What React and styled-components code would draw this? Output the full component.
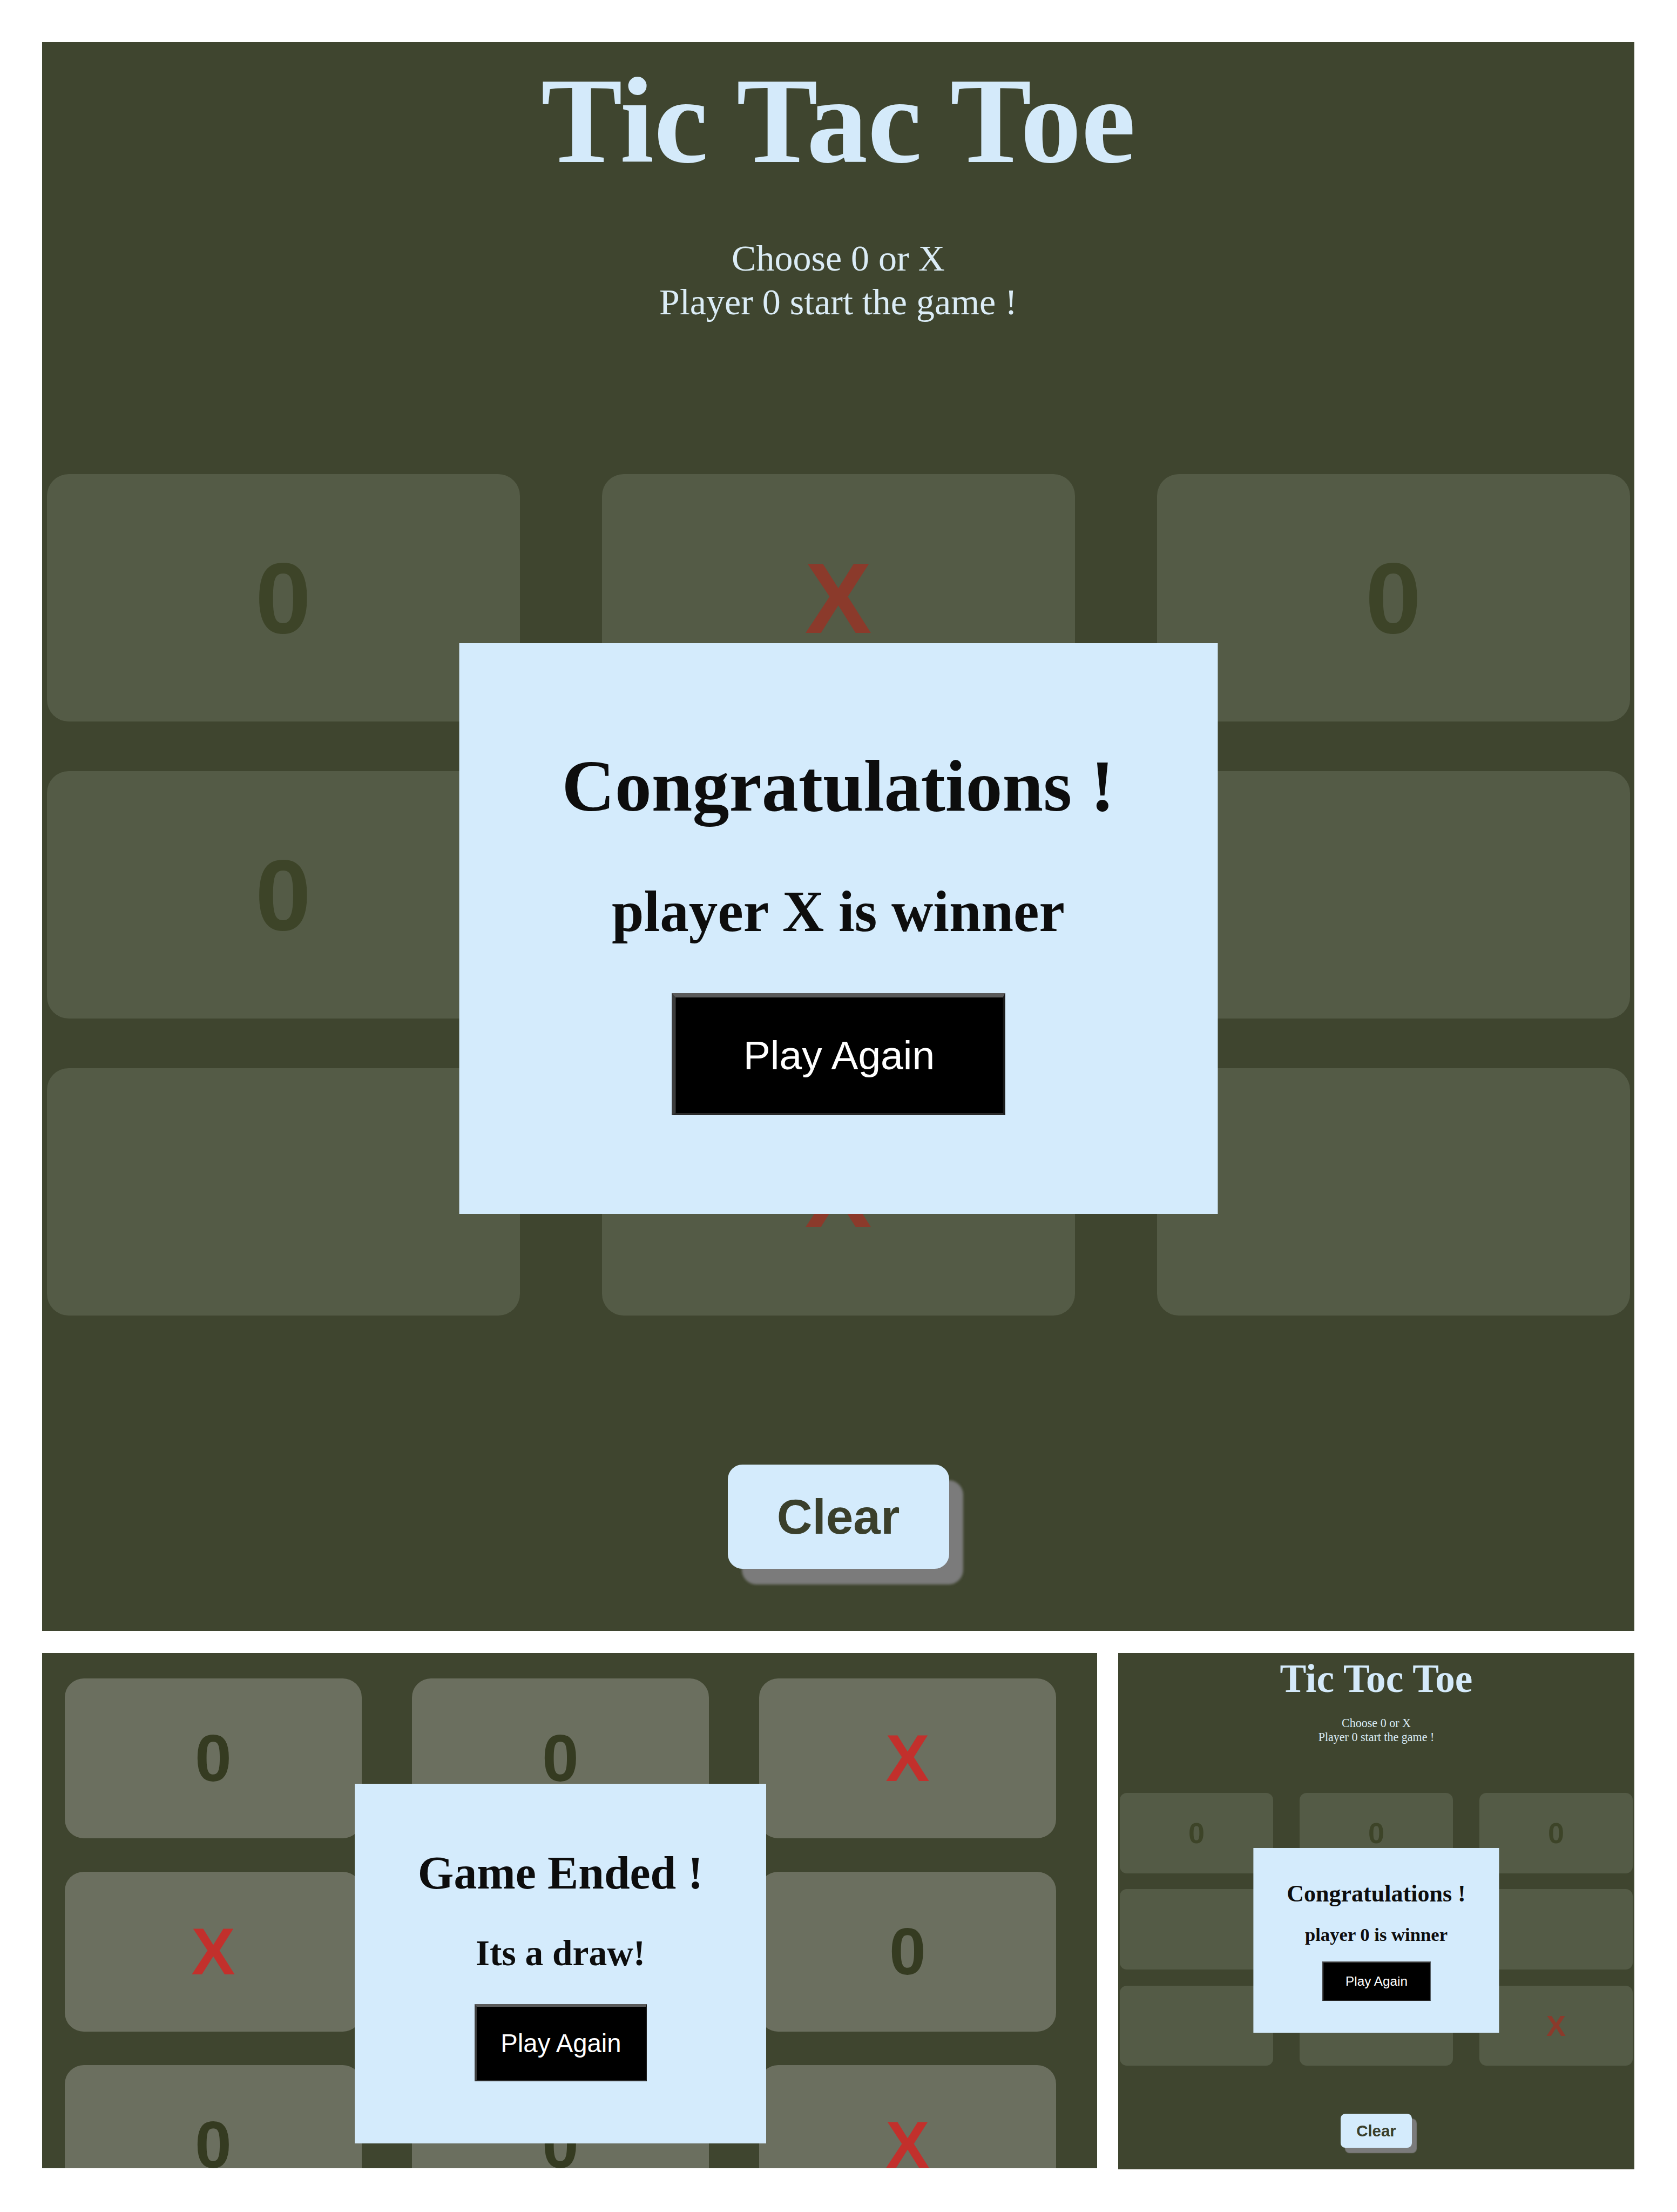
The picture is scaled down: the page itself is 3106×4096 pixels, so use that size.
import React from 'react';
import styled, { createGlobalStyle } from 'styled-components';

const serif = '"Liberation Serif", "Times New Roman", serif';
const sans = '"Liberation Sans", Arial, sans-serif';

// every size of a game screen is written at full scale and multiplied by $s
const u = (n) => (p) => `${n * p.$s}px`;

const GlobalStyle = createGlobalStyle`
  html, body {
    margin: 0;
    background: #ffffff;
  }
`;

const Collage = styled.div`
  display: flex;
  flex-direction: column;
  gap: 41px;
  padding: 78px 79px 0 78px;
`;

const BottomRow = styled.div`
  display: flex;
  gap: 39px;
`;

const Screen = styled.div`
  position: relative;
  overflow: hidden;
  box-sizing: border-box;
  width: ${(p) => p.$w}px;
  height: ${(p) => p.$h}px;
  background: #3f452f;
  display: flex;
  flex-direction: column;
  align-items: center;
`;

const CropScreen = styled(Screen)`
  align-items: flex-start;
  padding: 47px 0 0 42px;
`;

const Title = styled.h1`
  margin: ${u(33)} 0 0;
  font: bold ${u(226)} ${serif};
  line-height: 1;
  color: #d4eafa;
`;

const Subtitle = styled.p`
  margin: ${u(101)} 0 0;
  font: ${u(68)} ${serif};
  line-height: ${u(81)};
  color: #dbecf6;
  text-align: center;
`;

const BoardArea = styled.div`
  position: relative;
  margin-top: ${(p) => p.$mt}px;
`;

const Board = styled.div`
  display: grid;
  grid-template-columns: repeat(3, ${(p) => p.$cellW}px);
  grid-auto-rows: ${(p) => p.$cellH}px;
  gap: ${(p) => p.$rowGap}px ${(p) => p.$colGap}px;
`;

const Cell = styled.div`
  display: flex;
  align-items: center;
  justify-content: center;
  border-radius: ${(p) => p.$r}px;
  background: ${(p) => (p.$bright ? '#6b6f5f' : '#545b46')};
  font: bold ${(p) => p.$fs}px ${sans};
  color: ${(p) =>
    p.$mark === 'X'
      ? p.$bright
        ? '#c2302c'
        : '#8b3a2b'
      : p.$bright
      ? '#353b21'
      : '#3d4428'};
`;

const Modal = styled.div`
  position: absolute;
  top: ${(p) => p.$top}px;
  left: 50%;
  transform: translateX(-50%);
  width: ${(p) => p.$w}px;
  box-sizing: border-box;
  padding: ${u(196)} 0 ${u(183)};
  background: #d4ebfc;
  display: flex;
  flex-direction: column;
  align-items: center;
`;

const ModalTitle = styled.h2`
  margin: 0;
  font: bold ${u(136)} ${serif};
  line-height: 1;
  color: #0d0d0d;
  white-space: nowrap;
`;

const ModalText = styled.h3`
  margin: ${u(112)} 0 0;
  font: bold ${u(107)} ${serif};
  line-height: 1;
  color: #0d0d0d;
  white-space: nowrap;
`;

const PlayButton = styled.button`
  margin-top: ${u(97)};
  width: ${(p) => p.$w}px;
  height: ${u(226)};
  box-sizing: border-box;
  background: #000;
  color: #fff;
  font: ${u(75)} ${sans};
  border-style: solid;
  border-width: ${u(8)} ${u(4)} ${u(4)} ${u(7)};
  border-color: #5a5a5a #1a1a1a #2a2a2a #3c3c3c;
  padding: 0;
`;

const ClearButton = styled.button`
  margin-top: ${u(276)};
  width: ${u(410)};
  height: ${u(193)};
  border: none;
  border-radius: ${u(27)};
  background: #d4ebfc;
  box-shadow: ${u(26)} ${u(29)} ${u(4)} #7b7b7b;
  font: bold ${u(91)} ${sans};
  color: #3a3f2b;
  padding: 0;
`;

const GameBoard = ({ cells, bright, cellW, cellH, colGap, rowGap, r, fs }) => (
  <Board $cellW={cellW} $cellH={cellH} $colGap={colGap} $rowGap={rowGap}>
    {cells.map((m, i) => (
      <Cell key={i} $mark={m} $bright={bright} $r={r} $fs={fs}>
        {m}
      </Cell>
    ))}
  </Board>
);

const GameOver = ({ s, top, width, btnWidth, title, message }) => (
  <Modal $s={s} $top={top} $w={width}>
    <ModalTitle $s={s}>{title}</ModalTitle>
    <ModalText $s={s}>{message}</ModalText>
    <PlayButton $s={s} $w={btnWidth}>
      Play Again
    </PlayButton>
  </Modal>
);

const FullScreen = ({ s, w, h, title, cells, message, fs }) => (
  <Screen $w={w} $h={h}>
    <Title $s={s}>{title}</Title>
    <Subtitle $s={s}>
      Choose 0 or X
      <br />
      Player 0 start the game !
    </Subtitle>
    <BoardArea $mt={278 * s}>
      <GameBoard
        cells={cells}
        cellW={876 * s}
        cellH={458 * s}
        colGap={152 * s}
        rowGap={92 * s}
        r={40 * s}
        fs={fs}
      />
      <GameOver
        s={s}
        top={313 * s}
        width={1405 * s}
        btnWidth={617 * s}
        title="Congratulations !"
        message={message}
      />
    </BoardArea>
    <ClearButton $s={s}>Clear</ClearButton>
  </Screen>
);

const App = () => (
  <>
    <GlobalStyle />
    <Collage>
      <FullScreen
        s={1}
        w={2949}
        h={2942}
        title="Tic Tac Toe"
        message="player X is winner"
        fs={186}
        cells={['0', 'X', '0', '0', '', '', '', 'X', '']}
      />
      <BottomRow>
        <CropScreen $w={1954} $h={954}>
          <BoardArea $mt={0}>
            <GameBoard
              bright
              cells={['0', '0', 'X', 'X', '', '0', '0', '0', 'X']}
              cellW={550}
              cellH={296}
              colGap={93}
              rowGap={62}
              r={35}
              fs={122}
            />
            <GameOver
              s={0.63}
              top={195}
              width={762}
              btnWidth={319}
              title="Game Ended !"
              message="Its a draw!"
            />
          </BoardArea>
        </CropScreen>
        <FullScreen
          s={0.324}
          w={956}
          h={956}
          title="Tic Toc Toe"
          message="player 0 is winner"
          fs={54}
          cells={['0', '0', '0', '', '', '', '', '', 'X']}
        />
      </BottomRow>
    </Collage>
  </>
);

export default App;
